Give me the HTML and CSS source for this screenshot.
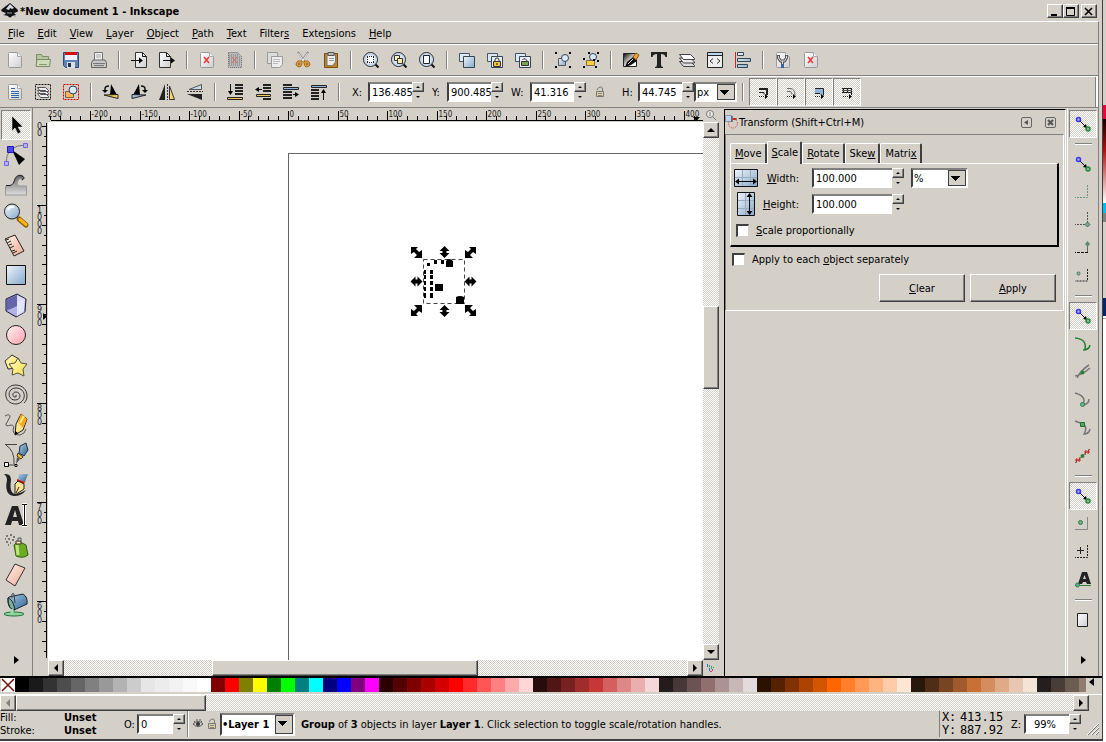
FILE: index.html
```html
<!DOCTYPE html>
<html lang="en">
<head>
<meta charset="utf-8">
<title>*New document 1 - Inkscape</title>
<link rel="stylesheet" href="styles.css">
</head>
<body>
<svg class="defs" aria-hidden="true">
  <defs>
    <linearGradient id="blue" x1="0" y1="0" x2="1" y2="1"><stop offset="0" stop-color="#eef4fa"/><stop offset="1" stop-color="#86a9cc"/></linearGradient>
    <linearGradient id="pink" x1="0" y1="0" x2="1" y2="1"><stop offset="0" stop-color="#fff4f4"/><stop offset="1" stop-color="#ff9fae"/></linearGradient>
    <linearGradient id="peach" x1="0" y1="0" x2="1" y2="1"><stop offset="0" stop-color="#fff3ec"/><stop offset="1" stop-color="#eca890"/></linearGradient>
    <linearGradient id="gold" x1="0" y1="0" x2="1" y2="1"><stop offset="0" stop-color="#fffbd0"/><stop offset="1" stop-color="#f5dd3c"/></linearGradient>
    <linearGradient id="steel" x1="0" y1="0" x2="1" y2="1"><stop offset="0" stop-color="#a9cbe4"/><stop offset="1" stop-color="#2f658f"/></linearGradient>
    <linearGradient id="paper" x1="0" y1="0" x2="1" y2="1"><stop offset="0" stop-color="#fff"/><stop offset="1" stop-color="#cfcfcf"/></linearGradient>
    <linearGradient id="wave" x1="0" y1="0" x2="0" y2="1"><stop offset="0" stop-color="#666"/><stop offset="1" stop-color="#ddd"/></linearGradient>
    <linearGradient id="ink" x1="0" y1="0" x2="1" y2="1"><stop offset="0" stop-color="#000"/><stop offset=".6" stop-color="#fff"/></linearGradient>
    <symbol id="page" viewBox="0 0 16 16"><path d="M1.500 1.500q0-1 1-1h8l4 4v10q0 1-1 1h-11q-1 0-1-1z" fill="url(#paper)" stroke="#999"/><path d="M10.500.5v4h4" fill="#fff" stroke="#aaa"/></symbol>
    <symbol id="lens" viewBox="0 0 16 16"><path d="M12 12l3.500 3.500" stroke="#111" stroke-width="2"/><circle cx="7.500" cy="7.500" r="7" fill="#dce8f5" stroke="#222"/><circle cx="7.500" cy="7.500" r="5.700" fill="none" stroke="#b0c8e4"/></symbol>
    <symbol id="lock" viewBox="0 0 8 10"><path d="M2 5V3q0-2 2-2t2 2v2" fill="none" stroke="#333"/><path d="M.5 4.500h7v5h-7z" fill="#f4c040" stroke="#333"/><path d="M4 6v2" stroke="#222"/></symbol>
    <symbol id="unlock" viewBox="0 0 10 12"><path d="M2.500 4V3q1-2 3-2t2 2v3" fill="none" stroke="#777"/><path d="M1.500 5.500h7v5h-7z" fill="#ddd0a0" stroke="#777"/><path d="M3 7.500h4M3 9.500h4" stroke="#888"/></symbol>
    <symbol id="snap" viewBox="0 0 16 16"><path d="M5 5l6 6" stroke="#000"/><path d="M12 12l-4-1 3-3z"/><circle cx="3.500" cy="3.500" r="2" fill="#a8a8ff" stroke="#3838ee" stroke-width="1.500"/><circle cx="13" cy="13" r="2" fill="#91aea8" stroke="#248c36" stroke-width="1.500"/></symbol>
    <symbol id="shapes" viewBox="0 0 16 16"><path d="M3.500 6.500h7v7h-7z" fill="url(#blue)" stroke="#555"/><circle cx="10" cy="6" r="3.500" fill="#dbe9f6" stroke="#345"/></symbol>
  </defs>
</svg>

<div class="desktop">
<main class="window">
  <header class="titlebar">
    <svg class="logo" width="18" height="16" viewBox="0 0 18 16"><path d="M9 0l7 6q2 2 0 3l-3 1 2 2-4 1q-2 3-4 0l-4-1 2-2-3-1q-3-1-1-3z" fill="#111"/><path d="M9 1l4 4-2 1-2-1-1 2-3-1z" fill="#d5dce4"/><path d="M6 10h5M2 12h2m9 1h2" stroke="#8fa0b4"/></svg>
    <h1>*New document 1 - Inkscape</h1>
    <div class="caption">
      <button aria-label="Minimize"><svg width="10" height="9" viewBox="0 0 10 9"><path d="M1 7h6v2H1z"/></svg></button>
      <button aria-label="Maximize"><svg width="10" height="9" viewBox="0 0 10 9"><path d="M.5 1v7.500h8V1" fill="none" stroke="#000"/><path d="M0 0h9v2H0z"/></svg></button>
      <button class="shut" aria-label="Close"><svg width="10" height="9" viewBox="0 0 10 9"><path d="M1 1l7 7M8 1L1 8" stroke="#000" stroke-width="1.600"/></svg></button>
    </div>
  </header>

  <div class="frame">
  <nav class="menu">
    <button><u>F</u>ile</button><button><u>E</u>dit</button><button><u>V</u>iew</button><button><u>L</u>ayer</button><button><u>O</u>bject</button><button><u>P</u>ath</button><button><u>T</u>ext</button><button>Filter<u>s</u></button><button>Exte<u>n</u>sions</button><button><u>H</u>elp</button>
  </nav>

  <div class="bar commands">
    <button aria-label="New"><svg viewBox="0 0 16 16"><use href="#page"/></svg></button>
    <button aria-label="Open"><svg viewBox="0 0 16 16"><path d="M1.500 14.500v-12h5l1 2h6v10z" fill="#b8c6a0" stroke="#7d8a6b"/><path d="M2 7.500h13.500l-1 7H1z" fill="#cfdcb8" stroke="#7d8a6b"/><path d="M4 12.500h8" stroke="#899974"/></svg></button>
    <button aria-label="Save"><svg viewBox="0 0 16 16"><path d="M.5.5h15v15h-13l-2-2z" fill="#5c82b8" stroke="#294a78"/><path d="M2 1h12v7H2z" fill="#eef"/><path d="M2 0h12v3H2z" fill="#d01010"/><path d="M4 10h8v6H4z" fill="#dde"/><path d="M5 11h3v4H5z" fill="#234"/></svg></button>
    <button aria-label="Print"><svg viewBox="0 0 16 16"><path d="M3.500 8.500v-8h8v8" fill="#eee" stroke="#777"/><path d="M5 3h5M5 5h5" stroke="#aaa"/><path d="M2 8h12l1.500 3v4.500H.5V11z" fill="#c8c8c8" stroke="#666"/><path d="M2 11.500h12M3 13.500h10" stroke="#777"/></svg></button>
    <i class="sep"></i>
    <button aria-label="Import"><svg viewBox="0 0 16 16"><path d="M4.500.5h7l4 4v11h-11z" fill="url(#paper)" stroke="#333"/><path d="M11.500.5v4h4M0 8.500h9" fill="none" stroke="#111"/><path d="M8 5.500l4 3-4 3z"/></svg></button>
    <button aria-label="Export"><svg viewBox="0 0 16 16"><path d="M.5.5h7l4 4v11H.5z" fill="url(#paper)" stroke="#333"/><path d="M7.500.5v4h4M4 8.500h9" fill="none" stroke="#111"/><path d="M12 5.500l4 3-4 3z"/></svg></button>
    <i class="sep"></i>
    <button aria-label="Undo"><svg viewBox="0 0 16 16"><use href="#page"/><path d="M5 5l5 6M10 5l-5 6" stroke="#e33" stroke-width="1.500"/></svg></button>
    <button aria-label="Redo"><svg viewBox="0 0 16 16"><path d="M1.500.5h9l4 4v11h-13z" fill="#bbb" stroke="#666" stroke-dasharray="1 1"/><path d="M2 3h10M2 5h12M2 7h12M2 9h12M2 11h12M2 13h12" stroke="#777" stroke-dasharray="1 1"/><path d="M5 5l5 6M10 5l-5 6" stroke="#d66"/></svg></button>
    <i class="sep"></i>
    <button aria-label="Copy"><svg viewBox="0 0 16 16"><path d="M.5.5h10v11H.5z" fill="#ddd" stroke="#999"/><path d="M4.500 4.500h11v8l-3 3h-8z" fill="#eee" stroke="#999"/><path d="M6 7.500h7M6 9.500h7M6 11.500h5" stroke="#bbb"/></svg></button>
    <button aria-label="Cut"><svg viewBox="0 0 16 16"><path d="M3 0l6 9M13 0L7 9" stroke="#888" stroke-width="2"/><path d="M3.500 1l5 8M12.500 1l-5 8" stroke="#eee"/><path d="M7 9H3q-2 1-2 4 1 2 4 2 2-1 2-4zM9 9h4q2 1 2 4-1 2-4 2-2-1-2-4z" fill="#d79b3e" stroke="#a96c14"/><path d="M3 12h2m6 0h2" stroke="#644"/></svg></button>
    <button aria-label="Paste"><svg viewBox="0 0 16 16"><path d="M1.500 1.500h13v14h-13z" fill="#bd832b" stroke="#76500f"/><path d="M4 3h8.500v7l-3 3.500H4z" fill="#eee" stroke="#777"/><path d="M5 .5h6v3H5z" fill="#bbb" stroke="#555"/><path d="M6 6.500h5M6 8.500h5" stroke="#999"/></svg></button>
    <i class="sep"></i>
    <button aria-label="Zoom selection"><svg viewBox="0 0 16 16"><use href="#lens"/><path d="M4 4h7v7H4z" fill="#fff"/><path d="M4 4.500h8M4 10.500h8M4.500 5v6M10.500 5v6" stroke="#222" stroke-dasharray="1 1"/></svg></button>
    <button aria-label="Zoom drawing"><svg viewBox="0 0 16 16"><use href="#lens"/><path d="M3.500 3.500h5v5h-5z" fill="#fff6c4" stroke="#333"/><path d="M6.500 6.500h5v5h-5z" fill="#ffe9a0" stroke="#333"/></svg></button>
    <button aria-label="Zoom page"><svg viewBox="0 0 16 16"><use href="#lens"/><path d="M4.500 3.500h6v8h-6z" fill="#fff" stroke="#222"/></svg></button>
    <i class="sep"></i>
    <button aria-label="Duplicate"><svg viewBox="0 0 16 16"><path d="M.5 1.500h10v8H.5z" fill="#dce8f2" stroke="#456"/><path d="M4.500 4.500h11v11h-11z" fill="url(#blue)" stroke="#345"/></svg></button>
    <button aria-label="Clone"><svg viewBox="0 0 16 16"><path d="M.5 1.500h10v8H.5z" fill="#dce8f2" stroke="#456"/><path d="M4.500 4.500h11v11h-11z" fill="#e8eef4" stroke="#345"/><use href="#lock" x="6" y="5" width="8" height="10"/></svg></button>
    <button aria-label="Unlink clone"><svg viewBox="0 0 16 16"><path d="M.5 1.500h10v8H.5z" fill="#dce8f2" stroke="#456"/><path d="M4.500 4.500h11v11h-11z" fill="#e8eef4" stroke="#345"/><path d="M7.500 8q1-2 3-1t1 3" fill="none" stroke="#333"/><path d="M6.500 9.500h7v4h-7z" fill="#79a552" stroke="#333"/></svg></button>
    <i class="sep"></i>
    <button aria-label="Group"><svg viewBox="0 0 16 16"><use href="#shapes"/><path d="M0 0h2v2H0zM14 0h2v2h-2zM0 14h2v2H0zM14 14h2v2h-2z"/></svg></button>
    <button aria-label="Ungroup"><svg viewBox="0 0 16 16"><path d="M3.500 8.500h8v5h-8z" fill="#f7cf3d" stroke="#864"/><circle cx="10" cy="5" r="3.500" fill="#dbe9f6" stroke="#345"/><path d="M0 6h2v2H0zM10 7h2v2h-2zM0 14h2v2H0zM12 14h2v2h-2zM5 0h2v2H5zM14 0h2v2h-2zM14 8h2v2h-2z"/></svg></button>
    <i class="sep"></i>
    <button aria-label="Fill and stroke"><svg viewBox="0 0 16 16"><path d="M.5 1.500h13v13H.5z" fill="url(#ink)" stroke="#222"/><path d="M2 15l2-5 6-5 4 4-6 4z" fill="#111"/><path d="M5 12l5-5" stroke="#ddd"/><path d="M10 5l3-4 3 2-3 5z" fill="#eda33c" stroke="#8a5714"/></svg></button>
    <button aria-label="Text and font"><svg viewBox="0 0 16 16"><path d="M0 0h16v5h-1.500Q14 2 10 2v10.500Q10 15 12 15v1H4v-1q2 0 2-2.500V2Q2 2 1.500 5H0z" fill="#222"/></svg></button>
    <button aria-label="Layers"><svg viewBox="0 0 16 16"><path d="M.5 9.500h11l4 4v1h-11z" fill="#ddd" stroke="#444"/><path d="M.5 6h11l4 4v1h-11z" fill="#e8e8e8" stroke="#444"/><path d="M.5 2.500h11l4 4v1h-11z" fill="#fff" stroke="#444"/></svg></button>
    <button aria-label="XML editor"><svg viewBox="0 0 16 16"><path d="M.5.5h15v15H.5z" fill="#eee" stroke="#222"/><path d="M1 1h14v2H1z" fill="#bed4ea"/><path d="M1 3.500h14" stroke="#222"/><path d="M6 6.500L3 9l3 2.500M10 6.500L13 9l-3 2.500" fill="none" stroke="#333"/></svg></button>
    <button aria-label="Align"><svg viewBox="0 0 16 16"><path d="M.5 0v16" stroke="#c22"/><path d="M2.500.5h6v3h-6zM2.500 6.500h13v3h-13zM2.500 12.500h10v3h-10z" fill="url(#blue)" stroke="#345"/></svg></button>
    <i class="sep"></i>
    <button aria-label="Preferences"><svg viewBox="0 0 16 16"><use href="#page"/><path d="M3.500 3v3l2 3h4l2-3V3M7.500 9v3" fill="none" stroke="#555" stroke-width="3"/><path d="M3.500 4v2l2 3h4l2-3V4M7.500 9v3" fill="none" stroke="#ddd"/><path d="M6 12h3v4H6z" fill="#35659b"/></svg></button>
    <button aria-label="Document properties"><svg viewBox="0 0 16 16"><use href="#page"/><path d="M5 5l5 6M10 5l-5 6" stroke="#e33" stroke-width="1.500"/></svg></button>
  </div>

  <div class="bar controls">
    <button aria-label="Select all"><svg viewBox="0 0 16 16"><use href="#page"/><path d="M4 4.500h4M4 7.500h8M4 9.500h8M4 11.500h8M4 13.500h8" stroke="#2f68ad"/></svg></button>
    <button aria-label="Select in all layers"><svg viewBox="0 0 16 16"><path d="M.5.5h15v15H.5z" fill="none" stroke="#111" stroke-dasharray="2 1"/><path d="M2.500 9.500h8l3 3v1h-8zM2.500 6.500h8l3 3v1h-8zM2.500 3.500h8l3 3v1h-8z" fill="#eee" stroke="#555"/></svg></button>
    <button aria-label="Deselect"><svg viewBox="0 0 16 16"><path d="M.5.5h15v15H.5z" fill="none" stroke="#d00" stroke-dasharray="2 1"/><path d="M2.500 7.500h8v6h-8z" fill="#ffb65c" stroke="#764"/><circle cx="10" cy="6" r="4" fill="#dbe9f6" stroke="#345"/></svg></button>
    <i class="sep"></i>
    <button aria-label="Rotate left"><svg viewBox="0 0 16 16"><path d="M8 0l6 11H7z"/><path d="M1 11l14-.5v4z" fill="#f3cf5a" stroke="#222"/><path d="M2 8V5q0-3 4-3" fill="none" stroke="#111" stroke-width="1.500"/><path d="M-1 6h6l-3 3z"/></svg></button>
    <button aria-label="Rotate right"><svg viewBox="0 0 16 16"><path d="M8 0L2 11h7z"/><path d="M15 11l-14-.5v4z" fill="#9dbcd8" stroke="#222"/><path d="M14 8V5q0-3-4-3" fill="none" stroke="#111" stroke-width="1.500"/><path d="M17 6h-6l3 3z"/></svg></button>
    <button aria-label="Flip horizontal"><svg viewBox="0 0 16 16"><path d="M6 0v16H0z" fill="#222"/><path d="M10.500 2v13.500h5z" fill="#f6d568" stroke="#333"/><path d="M8.500 0v16" stroke="#333" stroke-dasharray="2 1"/></svg></button>
    <button aria-label="Flip vertical"><svg viewBox="0 0 16 16"><path d="M2 5.500L14.500.5v5z" fill="#c4d9ee" stroke="#555"/><path d="M0 10h15v6z" fill="#222"/><path d="M0 7.500h16" stroke="#333" stroke-dasharray="2 1"/></svg></button>
    <i class="sep"></i>
    <button aria-label="Lower to bottom"><svg viewBox="0 0 16 16"><path d="M8 1h8M8 4h8M8 7h8M8 10h8" stroke="#222" stroke-width="2"/><path d="M.5 13.500h15v2H.5z" fill="#f3c854" stroke="#222"/><path d="M3.500 0v9" stroke="#111"/><path d="M1 7h5l-2.500 4z"/></svg></button>
    <button aria-label="Lower"><svg viewBox="0 0 16 16"><path d="M8 1h8M8 4h8M8 7h8M8 15h8" stroke="#222" stroke-width="2"/><path d="M1.500 10.500h14v2h-14z" fill="#f3c854" stroke="#222"/><path d="M2 5.500h5" stroke="#111"/><path d="M0 5.500L4 3v5z"/></svg></button>
    <button aria-label="Raise"><svg viewBox="0 0 16 16"><path d="M0 1h9M0 8h9M0 11h9M0 14h9" stroke="#222" stroke-width="2"/><path d="M.5 3.500h15v2H.5z" fill="#8fb4d8" stroke="#222"/><path d="M10 10.500h3" stroke="#111"/><path d="M12 8l4 2.500-4 2.500z"/></svg></button>
    <button aria-label="Raise to top"><svg viewBox="0 0 16 16"><path d="M0 6h8M0 9h8M0 12h8M0 15h8" stroke="#222" stroke-width="2"/><path d="M.5 1.500h15v2H.5z" fill="#8fb4d8" stroke="#222"/><path d="M12.500 7v9" stroke="#111"/><path d="M10 9h5l-2.500-4z"/></svg></button>
    <i class="sep"></i>
    <div class="field"><label for="x">X:</label><span class="spin"><input id="x" value="136.485"><span><button aria-label="Increase X"></button><button aria-label="Decrease X"></button></span></span></div>
    <div class="field"><label for="y">Y:</label><span class="spin"><input id="y" value="900.485"><span><button aria-label="Increase Y"></button><button aria-label="Decrease Y"></button></span></span></div>
    <div class="field"><label for="w">W:</label><span class="spin"><input id="w" value="41.316"><span><button aria-label="Increase W"></button><button aria-label="Decrease W"></button></span></span></div>
    <button aria-label="Lock ratio"><svg class="small" viewBox="0 0 10 12"><use href="#unlock"/></svg></button>
    <div class="field last"><label for="h">H:</label><span class="spin"><input id="h" value="44.745"><span><button aria-label="Increase H"></button><button aria-label="Decrease H"></button></span></span></div>
    <span class="pick units"><select aria-label="Units"><option>px</option></select></span>
    <i class="sep"></i>
    <button class="on" aria-label="Scale stroke"><svg viewBox="0 0 16 16"><path d="M4 5h8v6" fill="none" stroke="#222" stroke-width="2"/><path d="M4 8.500h5v2" fill="none" stroke="#222"/><path d="M4 12.500h7" stroke="#222" stroke-dasharray="1 1"/><path d="M10 10l3 2.500-3 2.500z"/></svg></button>
    <button class="on" aria-label="Scale corners"><svg viewBox="0 0 16 16"><path d="M4 4.500h3q5 0 5 7M4 7.500h3q2 0 2 3" fill="none" stroke="#666"/><path d="M4 12.500h7" stroke="#222" stroke-dasharray="1 1"/><path d="M10 10l3 2.500-3 2.500z"/></svg></button>
    <button class="on" aria-label="Move gradients"><svg viewBox="0 0 16 16"><path d="M4 5h8v6H9V9H4z" fill="#8fb4d8"/><path d="M4 4.500h8.500v7M4 9.500h5" fill="none" stroke="#222"/><path d="M4 12.500h7" stroke="#222" stroke-dasharray="1 1"/><path d="M10 10l3 2.500-3 2.500z"/></svg></button>
    <button class="on" aria-label="Move patterns"><svg viewBox="0 0 16 16"><path d="M3 4.500h10M3 8.500h10M4.500 4v5M8.500 4v5M12.500 4v7" fill="none" stroke="#222"/><path d="M3 6.500h10" stroke="#555"/><path d="M4 12.500h7" stroke="#222" stroke-dasharray="1 1"/><path d="M10 10l3 2.500-3 2.500z"/></svg></button>
    <i class="handle"></i>
  </div>

  <section class="work">
    <div class="toolbox">
      <button class="on" aria-label="Select"><svg viewBox="0 0 24 24"><path d="M8 3v15l3-3 3 6 3-2-3-5h5z" fill="#000" stroke="#fff" stroke-width=".5"/></svg></button>
      <button aria-label="Node"><svg viewBox="0 0 24 24"><path d="M2 20Q2 2 22 2" fill="none" stroke="#777"/><path d="M8 7l13 9-6 6z"/><path d="M.5 18.500h4v4h-4zM19.500.5h4v4h-4z" fill="#b4b4f4" stroke="#6868e8"/><path d="M3.500 3.500h6v6h-6z" fill="#4b4be0" stroke="#1b1bb4"/></svg></button>
      <button aria-label="Tweak"><svg viewBox="0 0 24 24"><path d="M1.500 22v-9h4c6 0 3-11 11-11 4 0 5 4 2 5-2 0-1-2-3-1-3 2-3 7 1 7h6v9z" fill="url(#wave)" stroke="#999"/><path d="M2 12.500h4c6-1 3-10 10-10 4 0 5 4 2 4" fill="none" stroke="#222"/></svg></button>
      <button aria-label="Zoom"><svg viewBox="0 0 24 24"><path d="M15 16l7 6" stroke="#8b5b05" stroke-width="5" stroke-linecap="round"/><path d="M16 16.500l6 5" stroke="#fbb416" stroke-width="3" stroke-linecap="round"/><circle cx="8" cy="8.500" r="7.500" fill="url(#blue)" stroke="#222"/><path d="M4 7q2-4 6-3" fill="none" stroke="#fff" stroke-width="2"/></svg></button>
      <button aria-label="Measure"><svg viewBox="0 0 24 24"><path d="M1 6l10-4 9 16-10 5z" fill="url(#peach)" stroke="#222"/><path d="M2 7l3-1M3 10l4-2M5 12l3-1M6 15l4-2M8 18l3-1M9 20l4-2" stroke="#222"/></svg></button>
      <button aria-label="Rectangle"><svg viewBox="0 0 24 24"><path d="M2.500 2.500h19v19h-19z" fill="url(#blue)" stroke="#111"/></svg></button>
      <button aria-label="3D box"><svg viewBox="0 0 24 24"><path d="M2 6l11-5 9 5-1 13-9 5L2 18z" fill="#8f8fd0" stroke="#223"/><path d="M3 6l10-4v12L3 17z" fill="#6565ac"/><path d="M13 2l8 4-8 7z" fill="#dcdcf8"/><path d="M3 18l10-5 8 6-8 4z" fill="#b4b4e4"/><path d="M13 9l8-3-1 12-7 5z" fill="#e4e4ff"/></svg></button>
      <button aria-label="Ellipse"><svg viewBox="0 0 24 24"><circle cx="12" cy="12" r="9.500" fill="url(#pink)" stroke="#222"/></svg></button>
      <button aria-label="Star"><svg viewBox="0 0 24 24"><path d="M8 2l7 4-2 9-9 1-3-8z" fill="url(#gold)" stroke="#333"/><path d="M14 5l3 5 6 1-4 5 1 7-6-3-6 2 1-6-4-5 6-1z" fill="url(#gold)" stroke="#554"/></svg></button>
      <button aria-label="Spiral"><svg viewBox="0 0 24 24"><path d="M12 12q1 2-1 2c-3 0-3-5 1-5 5 0 6 8-1 8-8 0-8-12 1-12 11 0 11 15 0 16-13 0-14-18-1-19 8 0 12 5 12 11 0 3-1 5-3 7" fill="none" stroke="#333"/></svg></button>
      <button aria-label="Pencil"><svg viewBox="0 0 24 24"><path d="M1 3q5-3 5 1L2 11q-1 3 5 1 4 0 2 5 0 5 7 5 5-1 6-6" fill="none" stroke="#555"/><path d="M12 11L17 1l6 5-4 11-8 5z" fill="#fde58c" stroke="#222"/><path d="M14 9l3-8 6 5-4 9z" fill="#fba51b"/><path d="M16 10l4-7" stroke="#ffef7d" stroke-width="2"/><path d="M11 22v-4l3 2z"/></svg></button>
      <button aria-label="Bezier"><svg viewBox="0 0 24 24"><path d="M1 1.500h12M2 2q9 6 8 19M3 22h9" fill="none" stroke="#444"/><path d="M16 3l6-3 2 7-4 6-5-3z" fill="url(#steel)" stroke="#234"/><path d="M14 10l5 4-2 2-4-3z" fill="#f5c744" stroke="#432"/><path d="M13 14l3 2-4 5z" fill="#555"/><path d="M.5 19.500h4v4h-4zM11 21.500h2v2h-2z" fill="#fff" stroke="#000"/></svg></button>
      <button aria-label="Calligraphy"><svg viewBox="0 0 24 24"><path d="M0 1q7-1 7 6-2 13 4 14 4 0 11-4-4 6-12 6Q0 22 3 7q0-4-3-6z" fill="#222"/><path d="M15 1h9l-3 8-7-3z" fill="url(#steel)"/><path d="M13 6l8 3-1 2-7-3z" fill="#c11"/><path d="M11 11l3-3 6 3v5l-9 6z" fill="#fce491" stroke="#222"/><path d="M12 20l3-6" stroke="#222"/></svg></button>
      <button aria-label="Text"><svg viewBox="0 0 24 24"><path d="M1 22L8 3h6l6 19h-5l-1-4H8l-1 4zM9 14h4l-2-7z" fill="#222" fill-rule="evenodd"/><path d="M18 1.500h5M18 22.500h5M20.500 1v22" stroke="#fff" stroke-width="3"/><path d="M18 1.500h5M18 22.500h5M20.500 1v22" stroke="#111"/></svg></button>
      <button aria-label="Spray"><svg viewBox="0 0 24 24"><path d="M10 12q2-3 6-3l6 3 2 10q-5 4-12 1z" fill="#6cab25" stroke="#36600f"/><path d="M13 12l1 10" stroke="#b9e882" stroke-width="3"/><path d="M12 8h5v3h-5z" fill="#ffe8a0" stroke="#333"/><path d="M14 5h3v3h-3z" fill="#ccc" stroke="#555"/><path d="M2 3h2M6 2h2M9 4h2M4 6h2M8 7h2M2 9h2M6 10h1M1 6h1M4 12h1" stroke="#222"/></svg></button>
      <button aria-label="Eraser"><svg viewBox="0 0 24 24"><path d="M2 17L11 1l10 4-10 18z" fill="url(#peach)" stroke="#333"/></svg></button>
      <button aria-label="Paint bucket"><svg viewBox="0 0 24 24"><ellipse cx="10" cy="21" rx="10" ry="2" fill="#8fd59a" stroke="#267044"/><path d="M5 4l14-3q5 3 4 10L10 17Q3 15 4 5z" fill="url(#steel)" stroke="#223"/><path d="M4 5q5 1 7 12-7 0-7-12z" fill="#77b590" stroke="#223"/><path d="M8 16v5" fill="none" stroke="#9da" stroke-width="3"/><path d="M8 5q-1-6 2-4l1 9" fill="none" stroke="#345"/></svg></button>
      <span class="more"></span>
    </div>

    <div class="canvas-area">
      <div class="corner"></div>
      <svg id="hruler" class="hruler"></svg>
      <div class="corner"><svg width="12" height="12" viewBox="0 0 12 12"><circle cx="5" cy="5" r="3.500" fill="#eee" stroke="#777"/><path d="M8 8l3 3M5 3v4" stroke="#777"/></svg></div>
      <svg id="vruler" class="vruler"></svg>
      <div class="canvas">
        <div class="sheet"></div>
        <svg class="selection" width="68" height="72" viewBox="410 246 68 72">
          <defs>
            <path id="vert" d="M0-6l5 5H2v2h3L0 6l-5-5h3v-2h-3z"/>
          </defs>
          <path d="M423.500 259.500h41v44h-41z" fill="none" stroke="#444" stroke-dasharray="4 3"/>
          <path d="M427 263h3v3h-3zM434 260h3v4h-3zM441 260h3v4h-3zM446 261q3-4 7 0v6h-7zM424 270h2v4h-2zM430 270h3v4h-3zM424 275h2v4h-2zM430 275h3v4h-3zM424 281h2v4h-2zM430 281h3v4h-3zM424 287h2v4h-2zM430 287h3v4h-3zM424 293h2v5h-2zM430 293h3v5h-3zM435 284h8v7h-8zM456 297q4-2 8 0v7h-8z"/>
          <path d="M411 247h7l-2 2 3 3 3-2v8h-8l3-3-3-3-3 2zM476 247h-7l2 2-3 3-3-2v8h8l-3-3 3-3 3 2zM411 316h7l-2-2 3-3 3 2v-8h-8l3 3-3 3-3-2zM476 316h-7l2-2-3-3-3 2v-8h8l-3 3 3 3 3-2z"/>
          <use href="#vert" x="444.500" y="252"/><use href="#vert" x="444.500" y="311"/>
          <use href="#vert" transform="translate(416.500 281.500) rotate(90)"/><use href="#vert" transform="translate(470.500 281.500) rotate(90)"/>
        </svg>
      </div>
      <div class="scroll vertical"><button class="up" aria-label="Scroll up"></button><i class="before"></i><b></b><i class="after"></i><button class="down" aria-label="Scroll down"></button></div>
      <div class="corner"></div>
      <div class="scroll"><button class="left" aria-label="Scroll left"></button><i class="before"></i><b></b><i class="after"></i><button class="right" aria-label="Scroll right"></button></div>
      <div class="corner"><svg width="12" height="12" viewBox="0 0 12 12"><path d="M2 1l8 4-4 6H4z" fill="#c6cdd0"/><path d="M2 2h1v3H2zM4 6h1v3H4z" fill="#46b"/><path d="M4 3h1v2H4zM6 4h1v3H6zM8 5h1v1H8z" fill="#3a4"/><path d="M5 9h2v1H5zM7 7h1v2H7z" fill="#c46"/></svg></div>
    </div>

    <aside class="dock">
      <div class="dock-head">
        <svg width="14" height="14" viewBox="0 0 14 14"><circle cx="8" cy="8.500" r="4.500" fill="none" stroke="#d33" stroke-dasharray="1 1"/><path d="M.5.500h6v6h-6z" fill="#bfd4ea" stroke="#89a"/><path d="M7 7V1M8 4h4" stroke="#234"/><path d="M8 4h3" stroke="#d22" stroke-width="2"/></svg>
        <h2>Transform (Shift+Ctrl+M)</h2>
        <button aria-label="Iconify"><svg width="11" height="11" viewBox="0 0 11 11"><rect x=".5" y=".5" width="10" height="10" rx="1.500" fill="none" stroke="#666"/><path d="M7 3v5L3 5.500z" fill="#555"/></svg></button>
        <button aria-label="Close dialog"><svg width="11" height="11" viewBox="0 0 11 11"><rect x=".5" y=".5" width="10" height="10" rx="1.500" fill="none" stroke="#666"/><path d="M3 3l5 5M8 3L3 8" stroke="#555" stroke-width="2"/></svg></button>
      </div>
      <div class="dialog">
        <div class="tabs"><button><u>M</u>ove</button><button class="current"><u>S</u>cale</button><button><u>R</u>otate</button><button>Ske<u>w</u></button><button>Matri<u>x</u></button></div>
        <div class="panel">
          <div class="row">
            <svg width="24" height="20" viewBox="0 0 24 20"><path d="M.5 1.500h23v17H.5z" fill="url(#blue)" stroke="#111"/><path d="M8.500 2v16M16.500 2v16M1 9.500h22" stroke="#9ab"/><path d="M3 13.500h18" stroke="#000"/><path d="M1 13.500l4-3v6zM23 13.500l-4-3v6z"/></svg>
            <label for="width"><u>W</u>idth:</label>
            <span class="spin wide"><input id="width" value="100.000"><span><button aria-label="Increase width"></button><button aria-label="Decrease width"></button></span></span>
            <span class="pick percent"><select aria-label="Scale unit"><option>%</option></select></span>
          </div>
          <div class="row">
            <svg width="24" height="24" viewBox="0 0 24 24"><path d="M3.500.5h17v23h-17z" fill="url(#blue)" stroke="#111"/><path d="M4 8.500h16M4 16.500h16M11.500 1v22" stroke="#9ab"/><path d="M15.500 3v18" stroke="#000"/><path d="M15.500 1l-3 4h6zM15.500 23l-3-4h6z"/></svg>
            <label for="height"><u>H</u>eight:</label>
            <span class="spin wide"><input id="height" value="100.000"><span><button aria-label="Increase height"></button><button aria-label="Decrease height"></button></span></span>
          </div>
          <label class="check"><input type="checkbox"><span><u>S</u>cale proportionally</span></label>
        </div>
        <label class="check outer"><input type="checkbox"><span>Apply to each <u>o</u>bject separately</span></label>
        <div class="actions"><button><u>C</u>lear</button><button><u>A</u>pply</button></div>
      </div>
    </aside>

    <div class="snapbar">
      <button class="on" aria-label="Enable snapping"><svg viewBox="0 0 16 16"><use href="#snap"/></svg></button>
      <i class="rule"></i>
      <button aria-label="Snap bounding boxes"><svg viewBox="0 0 16 16"><use href="#snap"/></svg></button>
      <button aria-label="Snap to edges"><svg viewBox="0 0 16 16"><path d="M12.500 1v12.500H0" fill="none" stroke="#6a9a72" stroke-dasharray="2 1"/></svg></button>
      <button aria-label="Snap to corners"><svg viewBox="0 0 16 16"><path d="M12.500 0v12.500H0" fill="none" stroke="#555" stroke-dasharray="2 1"/><path d="M12.500 10l2.500 2.500-2.500 2.500-2.500-2.500z" fill="#79a68c" stroke="#476"/></svg></button>
      <button aria-label="Snap edge midpoints"><svg viewBox="0 0 16 16"><path d="M12.500 2v11" stroke="#666"/><path d="M13 12.500H0" stroke="#111" stroke-dasharray="3 1"/><path d="M12.500 1l2.500 3-2.500 3-2.500-3z" fill="#5c8a6c"/></svg></button>
      <button aria-label="Snap centers"><svg viewBox="0 0 16 16"><path d="M12.500 1v12H0" fill="none" stroke="#222" stroke-dasharray="2 1"/><circle cx="3.500" cy="5.500" r="1.500" fill="#9ba" stroke="#475"/></svg></button>
      <i class="rule"></i>
      <button class="on" aria-label="Snap nodes"><svg viewBox="0 0 16 16"><use href="#snap"/></svg></button>
      <button aria-label="Snap to paths"><svg viewBox="0 0 16 16"><path d="M0 2q12 1 10 11M8 14q6 0 7-5" fill="none" stroke="#26802f" stroke-width="1.500"/></svg></button>
      <button aria-label="Snap intersections"><svg viewBox="0 0 16 16"><path d="M0 12Q7 11 15 4M2 14Q6 6 14 1" fill="none" stroke="#777" stroke-width="1.500"/><circle cx="7.500" cy="8.500" r="2" fill="#298437"/></svg></button>
      <button aria-label="Snap cusp nodes"><svg viewBox="0 0 16 16"><path d="M0 1q12 3 8 12 6-1 6-6" fill="none" stroke="#777" stroke-width="1.500"/><circle cx="7.500" cy="12.500" r="2" fill="#79a9b0" stroke="#298437"/></svg></button>
      <button aria-label="Snap smooth nodes"><svg viewBox="0 0 16 16"><path d="M0 1l8 3q5 3 1 10 5 0 6-5" fill="none" stroke="#777" stroke-width="1.500"/><path d="M5.500 2.500h4v4h-4z" fill="#50a560" stroke="#207030"/></svg></button>
      <button aria-label="Snap line midpoints"><svg viewBox="0 0 16 16"><path d="M0 15L15 1" stroke="#777"/><path d="M2 10l-1 5M5 9l-1 5M11 2l-1 5M14 1l-1 5M0 12h6M9 4h6" stroke="#c22"/><circle cx="7.500" cy="8" r="2" fill="#298437"/></svg></button>
      <i class="rule"></i>
      <button class="on" aria-label="Snap others"><svg viewBox="0 0 16 16"><use href="#snap"/></svg></button>
      <button aria-label="Snap object centers"><svg viewBox="0 0 16 16"><path d="M12.500 1v12.500H0" fill="none" stroke="#888"/><circle cx="5.500" cy="6.500" r="2" fill="#7a9" stroke="#298437"/></svg></button>
      <button aria-label="Snap rotation centers"><svg viewBox="0 0 16 16"><path d="M12.500 1v12.500H0" fill="none" stroke="#222" stroke-dasharray="2 1"/><path d="M2 6.500h7M5.500 3v7" stroke="#222"/></svg></button>
      <button aria-label="Snap text baseline"><svg viewBox="0 0 16 16"><path d="M3 12L7 0h5l4 12h-4l-1-2H8l-1 2zM8 7h3L9.500 3z" fill="#222" fill-rule="evenodd"/><path d="M3 13.500h13" stroke="#298437"/><circle cx="2.500" cy="13" r="2" fill="#79b" stroke="#298437"/></svg></button>
      <i class="rule"></i>
      <button aria-label="Snap to page"><svg viewBox="0 0 16 16"><path d="M2.500 1.500h10v13h-10z" fill="url(#paper)" stroke="#222"/></svg></button>
      <span class="more"></span>
    </div>
  </section>
  </div>

  <div class="palette-row"><div id="palette" class="palette"></div><span class="palette-menu"></span></div>
  <div class="scroll palette-scroll"><button class="left dim" aria-label="Palette left"></button><b></b><i class="after"></i><button class="right" aria-label="Palette right"></button></div>

  <footer class="status">
    <dl><dt>Fill:</dt><dd>Unset</dd><dt>Stroke:</dt><dd>Unset</dd></dl>
    <label for="opacity">O:</label>
    <span class="spin opacity"><input id="opacity" value="0"><span><button aria-label="Increase opacity"></button><button aria-label="Decrease opacity"></button></span></span>
    <i class="sep"></i>
    <svg width="12" height="10" viewBox="0 0 12 10"><path d="M1 5q5-5 10 0-5 5-10 0z" fill="#ccc" stroke="#555"/><circle cx="6" cy="5" r="2" fill="#333"/><path d="M2 2l1 1M5 0v2M8 0v2M10 2l-1 1" stroke="#555"/></svg>
    <svg width="10" height="12" viewBox="0 0 10 12"><use href="#unlock"/></svg>
    <span class="pick layer"><select aria-label="Layer"><option>•Layer 1</option></select></span>
    <p><b>Group</b> of <b>3</b> objects in layer <b>Layer 1</b>. Click selection to toggle scale/rotation handles.</p>
    <div class="coords"><span>X:</span><output>413.15</output><span>Y:</span><output>887.92</output></div>
    <label for="zoom">Z:</label>
    <span class="spin zoom"><input id="zoom" value="99%"><span><button aria-label="Zoom in"></button><button aria-label="Zoom out"></button></span></span>
    <svg class="grip" width="12" height="12" viewBox="0 0 12 12"><path d="M0 12L12 0M4 12l8-8M8 12l4-4" stroke="#fff"/><path d="M1 12L12 1M5 12l7-7M9 12l3-3" stroke="#777"/></svg>
  </footer>
</main>
<div class="behind"></div>
</div>
<script src="script.js"></script>
</body>
</html>
```
FILE: styles.css
```css
* { box-sizing: border-box; }
body { margin: 0; background: #fff; font: 11px/13px "DejaVu Sans Condensed", "Noto Sans", sans-serif; color: #000; }
button, input, select { font: inherit; color: inherit; margin: 0; padding: 0; border: 0; background: none; border-radius: 0; }
h1, h2, p, dl, dd { margin: 0; font-size: inherit; }
svg { flex: none; }
.defs { position: absolute; width: 0; height: 0; }

.desktop { display: flex; height: 100vh; overflow: hidden; }
.window { flex: 1; min-width: 0; display: flex; flex-direction: column; background: #d4d0c8; border-right: 1px solid #404040; border-bottom: 2px solid #404040; margin-bottom: 1px; }
.behind { width: 3px; background: linear-gradient(#d4d0c8 0 105px, #f0023c 0 119px, #100 0, #b01010 150px, #fff 203px, #00bff0 0 213px, #808080 0 222px, #d4d0c8 0 298px, #0a246a 0 316px, #fff 0 318px, #aaa 0 319px, #fff 0); }

.titlebar { display: flex; align-items: center; height: 21px; gap: 1px; padding: 1px 0 0 1px; }
.titlebar h1 { flex: 1; }
.caption { display: flex; padding-right: 5px; }
.caption button { width: 16px; height: 14px; display: grid; place-items: center; }
.caption button, .scroll button, .scroll b, .spin button:first-child, .actions button { background: #d4d0c8; border: 1px solid; border-color: #fff #404040 #404040 #fff; box-shadow: inset -1px -1px #808080; }
.caption .shut { margin-left: 2px; }

.frame { flex: 1; min-height: 0; display: flex; flex-direction: column; border-top: 1px solid #fff; border-right: 1px solid #808080; margin-right: 3px; }
.menu { display: flex; height: 22px; padding: 1px 0 0 2px; border-bottom: 1px solid #808080; }
.menu button { padding: 0 7px 0 6px; }

.bar { display: flex; align-items: center; padding-left: 1px; border-top: 1px solid #fff; border-bottom: 1px solid #808080; }
.commands { height: 32px; }
.controls { height: 32px; }
.bar > button, .snapbar button { width: 28px; height: 28px; display: grid; place-items: center; flex: none; }
.bar svg, .snapbar svg { width: 16px; height: 16px; overflow: visible; }
.bar svg.small { width: 10px; height: 12px; }
.sep { flex: none; width: 2px; height: 18px; margin: 0 5px; border-left: 1px solid #808080; border-right: 1px solid #fff; }
.on { background: conic-gradient(#fff 25%, #d4d0c8 0 50%, #fff 0 75%, #d4d0c8 0) 0 0 / 2px 2px; border: 1px solid; border-color: #808080 #fff #fff #808080; }
.handle { margin-left: auto; width: 3px; align-self: stretch; border: 1px solid #808080; border-width: 0 0 0 1px; background: #fff; }

.field { display: flex; align-items: center; justify-content: space-between; width: 79px; padding-left: 8px; }
.field:nth-of-type(3) { width: 83px; }
.field.last { width: 80px; }
.sep + .field { padding-left: 7px; }
.spin { display: flex; height: 20px; width: 56px; }
.spin input { flex: 1; min-width: 0; background: #fff; padding-left: 2px; border: 2px solid; border-color: #808080 #fff #fff #404040; border-right: 0; outline: 0; }
.spin > span { width: 12px; display: flex; flex-direction: column; }
.spin button { height: 10px; display: grid; place-items: center; }
.spin button::before { content: ""; border: 2px solid transparent; border-top: 0; border-bottom: 2px solid #000; }
.spin button:last-child::before { border-bottom: 0; border-top: 2px solid #000; }
.spin.wide { width: 92px; }

.pick { position: relative; display: block; height: 20px; background: #fff; border: 2px solid; border-color: #808080 #fff #fff #404040; }
.pick select { appearance: none; width: 100%; height: 100%; padding-left: 1px; outline: 0; }
.pick::after { content: ""; position: absolute; right: 0; top: 0; bottom: 0; width: 16px; background: linear-gradient(#000, #000) 3px 6px / 9px 1px no-repeat, linear-gradient(#000, #000) 4px 7px / 7px 1px no-repeat, linear-gradient(#000, #000) 5px 8px / 5px 1px no-repeat, linear-gradient(#000, #000) 6px 9px / 3px 1px no-repeat, linear-gradient(#000, #000) 7px 10px / 1px 1px no-repeat, #d4d0c8; border: 1px solid #404040; background-origin: border-box; pointer-events: none; }
.units { width: 43px; }
.percent { width: 57px; margin-left: 7px; }

.work { flex: 1; min-height: 0; display: flex; }
.toolbox { width: 33px; padding: 2px 1px 0; border-right: 1px solid #808080; display: flex; flex-direction: column; }
.toolbox button { width: 30px; height: 30px; display: grid; place-items: center; }
.toolbox svg { width: 24px; height: 24px; overflow: visible; }
.more { margin: auto auto 12px; border: 4px solid transparent; border-left: 5px solid #000; border-right: 0; }

.canvas-area { flex: 1; min-width: 0; display: grid; grid-template: 14px minmax(0, 1fr) 16px / 15px minmax(0, 1fr) 16px; margin-right: 5px; }
.corner { display: grid; place-items: center; }
.hruler, .vruler { width: 100%; height: 100%; }
.hruler text, .vruler text { font-size: 8px; fill: #222; }
.vruler text { font-family: "DejaVu Sans", sans-serif; }
.canvas { position: relative; background: #fff; overflow: hidden; }
.sheet { position: absolute; left: 240px; top: 31px; right: 0; bottom: 0; border: solid #666; border-width: 1px 0 0 1px; }
.selection { position: absolute; left: 362px; top: 124px; }

.scroll { display: flex; height: 16px; background: conic-gradient(#fff 25%, #d4d0c8 0 50%, #fff 0 75%, #d4d0c8 0) 0 0 / 2px 2px; }
.scroll button { flex: none; width: 16px; height: 16px; display: grid; place-items: center; }
.scroll button::before { content: ""; border: 4px solid transparent; }
.scroll .left::before { border-left: 0; border-right-color: #000; }
.scroll .right::before { border-right: 0; border-left-color: #000; }
.scroll .up::before { border-top: 0; border-bottom-color: #000; }
.scroll .down::before { border-bottom: 0; border-top-color: #000; }
.scroll .dim::before { border-right-color: #808080; }
.scroll .before { flex: 149; }
.scroll b { flex: 265; }
.scroll .after { flex: 210; }
.scroll.vertical { flex-direction: column; height: auto; }
.vertical .before { flex: 168; }
.vertical b { flex: 81; }
.vertical .after { flex: 255; }
.palette-scroll { margin-right: 13px; }
.palette-scroll b { flex: 188; }
.palette-scroll .after { flex: 868; }

.dock { flex: none; width: 342px; margin-top: 1px; border: solid #000; border-width: 1px 0 0 1px; border-right: 1px solid #fff; }
.dock-head { display: flex; align-items: center; height: 24px; padding-right: 9px; gap: 0; }
.dock-head h2 { flex: 1; font-weight: normal; }
.dock-head button { width: 11px; height: 11px; }
.dock-head button + button { margin-left: 13px; }
.dock-head svg { display: block; }
.dialog { border: 1px solid; border-color: #808080 #fff #fff #808080; margin-right: 1px; padding: 6px 4px 8px 4px; }
.tabs { display: flex; align-items: flex-end; height: 22px; }
.tabs button { height: 20px; padding: 0 3px 0 4px; border: 1px solid #fff; border-right: 2px solid #404040; border-bottom: 0; border-radius: 2px 2px 0 0; white-space: nowrap; }
.tabs .current { height: 23px; margin-bottom: -1px; padding: 0 2px 2px 4px; background: #d4d0c8; z-index: 1; }
.panel { border: 1px solid #fff; border-right: 2px solid #000; border-bottom: 2px solid #000; padding: 1px 3px 8px; }
.row { display: flex; align-items: center; height: 26px; }
.row label { width: 41px; text-align: right; margin-right: 13px; }
.check { display: flex; align-items: center; gap: 7px; margin: 7px 0 0 2px; }
.check input { appearance: none; width: 13px; height: 13px; background: #fff; border: solid; border-width: 2px 1px 1px 2px; border-color: #404040 #d4d0c8 #d4d0c8 #404040; }
.check.outer { margin: 6px 0 8px 2px; }
.actions { display: flex; justify-content: flex-end; gap: 5px; padding-right: 3px; }
.actions button { width: 86px; height: 28px; }

.snapbar { flex: none; width: 31px; padding: 2px 0 0 1px; margin-left: 1px; border-left: 1px solid #fff; display: flex; flex-direction: column; }
.rule { height: 2px; margin: 5px 6px; border-top: 1px solid #808080; border-bottom: 1px solid #fff; }

.palette-row { display: flex; height: 19px; border-top: 2px solid #000; border-bottom: 1px solid #fff; padding-left: 1px; }
.palette { flex: 1; min-width: 0; display: flex; overflow: hidden; height: 14px; }
.palette span, .palette svg { flex: none; width: 14px; height: 14px; }
.palette-menu { margin: 0 8px 0 3px; align-self: flex-start; border: 4px solid transparent; border-left: 0; border-right: 5px solid #000; }

.status { display: flex; align-items: center; height: 28px; padding-bottom: 2px; white-space: nowrap; }
.status dl { display: grid; grid-template-columns: 64px 60px; }
.status dd { font-weight: bold; }
.opacity { width: 48px; margin-left: 2px; }
.status .sep { height: 26px; margin: 0 3px 0 2px; }
.status > svg { margin-right: 3px; }
.layer { width: 75px; height: 23px; font-weight: bold; }
.layer select { padding-left: 0; }
.status p { flex: 1; min-width: 0; padding-left: 6px; overflow: hidden; }
.coords { display: grid; grid-template-columns: 18px 51px; border-left: 1px solid #808080; padding-left: 2px; }
.coords span, .coords output { font: 12px/13px "DejaVu Sans Mono", monospace; }
.zoom { width: 57px; margin-left: 3px; }
.zoom input { padding-left: 8px; }
.status > .grip { margin: 10px 3px 0 6px; }
```
FILE: script.js
```js
const NS = "http://www.w3.org/2000/svg";
const ZOOM = 0.99;

function add(parent, name, attrs, text) {
  const el = document.createElementNS(NS, name);
  for (const key in attrs) el.setAttribute(key, attrs[key]);
  if (text) el.textContent = text;
  parent.appendChild(el);
}

// Horizontal ruler: a tick each 10 px, a label each 50 px.
const h = document.getElementById("hruler");
const hEnd = h.clientWidth || h.getBoundingClientRect().width;
let d = `M3 12.5H${hEnd}`;
for (let i = -24; 240 + i * 10 * ZOOM < hEnd; i++) {
  const x = Math.round(240 + i * 10 * ZOOM) + 0.5;
  const major = i % 5 === 0;
  d += `M${x} ${major ? 3 : 8}V12`;
  if (major && x + 16 < hEnd) add(h, "text", { x: x + 1, y: 9 }, String(i * 10));
}
add(h, "text", { x: 0, y: 9 }, "250");
add(h, "path", { d, stroke: "#000" });
add(h, "path", { d: `M${hEnd - 10} 9h7l-3.500 4z` });

// Vertical ruler: a tick each 10 px, labels stacked digit by digit.
const v = document.getElementById("vruler");
const vEnd = v.clientHeight || v.getBoundingClientRect().height;
d = `M13.5 1V${vEnd - 2}`;
for (let i = -8; 83 + i * 10 * ZOOM < vEnd; i++) {
  const y = Math.round(83 + i * 10 * ZOOM) + 0.5;
  const major = i % 10 === 0;
  d += `M${major ? 4 : i % 2 ? 11 : 9} ${y}H13`;
  if (major && y + 28 < vEnd) {
    String(1000 - i * 10).split("").forEach((c, n) => add(v, "text", { x: 4, y: y + 7 + n * 7 }, c));
  }
}
add(v, "text", { x: 4, y: 7 }, "0");
add(v, "text", { x: 4, y: 14 }, "0");
add(v, "path", { d, stroke: "#000" });
add(v, "path", { d: "M10 191v7l4-3.500z" });

const colors = ("000000 1a1a1a 333333 4d4d4d 666666 808080 999999 b3b3b3 cccccc e6e6e6 ececec f2f2f2 f9f9f9 ffffff " +
  "800000 ff0000 808000 ffff00 008000 00ff00 008080 00ffff 000080 0000ff 800080 ff00ff " +
  "2b0000 550000 800000 aa0000 d40000 ff0000 ff2a2a ff5555 ff8080 ffaaaa ffd5d5 " +
  "280b0b 501616 782121 a02c2c c83737 d35f5f de8787 e9afaf f4d7d7 " +
  "241c1c 483737 6c5353 916f6f ac9393 c8b7b7 e3dbdb " +
  "2b1100 552200 803300 aa4400 d45500 ff6600 ff7f2a ff9955 ffb380 ffccaa ffe6d5 " +
  "28170b 502d16 784421 a05a2c c87137 d38d5f deaa87 e9c6af f4e3d7 " +
  "241f1c 483e37 6c5d53 917c6f").split(" ");
const palette = document.getElementById("palette");
const none = document.createElementNS(NS, "svg");
none.setAttribute("viewBox", "0 0 14 14");
add(none, "path", { d: "M0 0h14v14H0z", fill: "#fff" });
add(none, "path", { d: "M1 1l12 12M13 1L1 13", stroke: "#701010", "stroke-width": 1.5 });
palette.appendChild(none);
for (const c of colors) {
  const s = document.createElement("span");
  s.style.background = "#" + c;
  palette.appendChild(s);
}
```
